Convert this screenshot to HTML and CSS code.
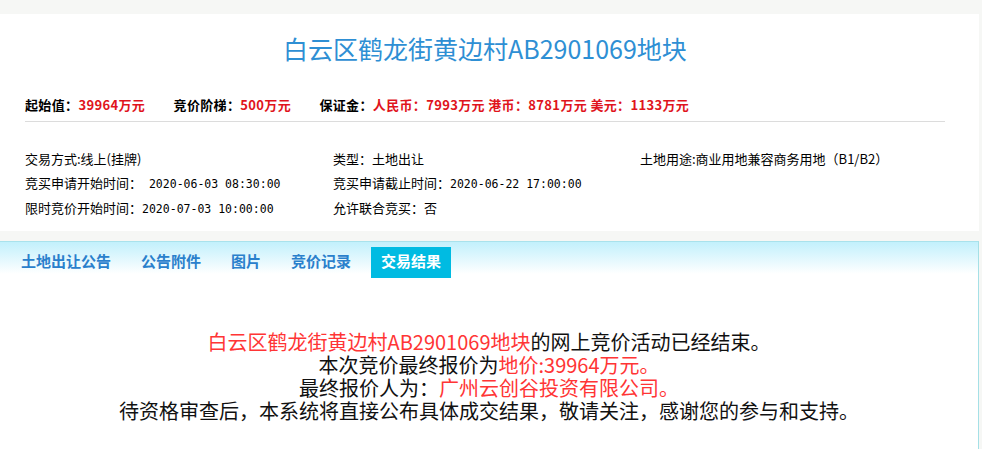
FILE: index.html
```html
<!DOCTYPE html>
<html lang="zh-CN">
<head>
  <meta charset="UTF-8">
  <title>白云区鹤龙街黄边村AB2901069地块</title>
  <link rel="stylesheet" href="styles.css">
</head>
<body>
  <!-- 地块概况 -->
  <div class="land-card">
    <h1 class="land-title">白云区鹤龙街黄边村AB2901069地块</h1>
    <div class="price-row">
      <span class="price-item">起始值：<em>39964万元</em></span>
      <span class="price-item">竞价阶梯：<em>500万元</em></span>
      <span class="price-item">保证金：<em>人民币：7993万元 港币：8781万元 美元：1133万元</em></span>
    </div>
    <div class="info-grid">
      <div>交易方式:线上(挂牌)</div>
      <div>类型：土地出让</div>
      <div>土地用途:商业用地兼容商务用地（B1/B2）</div>
      <div>竞买申请开始时间：<span class="num"> 2020-06-03 08:30:00</span></div>
      <div>竞买申请截止时间：<span class="num">2020-06-22 17:00:00</span></div>
      <div></div>
      <div>限时竞价开始时间：<span class="num">2020-07-03 10:00:00</span></div>
      <div>允许联合竞买：否</div>
      <div></div>
    </div>
  </div>

  <!-- 标签页 -->
  <div class="tab-panel">
    <ul class="tabs">
      <li>土地出让公告</li>
      <li>公告附件</li>
      <li>图片</li>
      <li>竞价记录</li>
      <li class="active">交易结果</li>
    </ul>
    <div class="result">
      <p><span class="hl">白云区鹤龙街黄边村AB2901069地块</span>的网上竞价活动已经结束。</p>
      <p>本次竞价最终报价为<span class="hl">地价:39964万元。</span></p>
      <p>最终报价人为：<span class="hl">广州云创谷投资有限公司。</span></p>
      <p>待资格审查后，本系统将直接公布具体成交结果，敬请关注，感谢您的参与和支持。</p>
    </div>
  </div>
</body>
</html>
```

FILE: styles.css
```css
body {
  margin: 0;
  padding-top: 14px;
  background-color: #f6f7f5;
  font-family: "Noto Sans CJK SC", sans-serif;
  color: #000;
  height: 435px;
  overflow: hidden;
}
.land-card {
  width: 920px;
  background-color: #fff;
  padding: 17px 34px 10px 25px;
}
.land-title {
  margin: 0;
  font-size: 25px;
  line-height: 34px;
  font-weight: normal;
  color: #2e8fd4;
  text-align: center;
}
.price-row {
  margin-top: 30px;
  font-size: 13px;
  line-height: 20px;
  font-weight: bold;
  letter-spacing: 0.35px;
  padding-bottom: 6px;
  border-bottom: 1px solid #dcdcdc;
}
.price-item {
  margin-right: 25px;
}
.price-item em {
  font-style: normal;
  color: #e0141c;
}
.info-grid {
  display: grid;
  grid-template-columns: 308px 307px 1fr;
  margin-top: 25px;
  font-size: 13px;
  line-height: 24px;
}
.num {
  font-family: "DejaVu Sans Mono", monospace;
  font-size: 11.5px;
}
.tab-panel {
  margin-top: 10px;
  width: 979px;
  height: 220px;
  border-top: 1px solid #a9e2ec;
  border-right: 1px solid #a5e0e6;
  background: linear-gradient(#c2f0fc, #ffffff 32px);
  box-sizing: border-box;
}
.tabs {
  display: flex;
  gap: 10px;
  list-style: none;
  margin: 0;
  padding: 5px 0 0 11px;
}
.tabs li {
  padding: 0 10px;
  height: 31px;
  line-height: 28px;
  font-size: 15px;
  font-weight: bold;
  color: #2a80cc;
}
.tabs li.active {
  background-color: #00bbe2;
  color: #fff;
}
.result {
  margin-top: 52px;
  text-align: center;
  font-size: 20px;
  line-height: 23px;
  color: #111;
}
.result p {
  margin: 0;
}
.hl {
  color: #ff3535;
}
```
